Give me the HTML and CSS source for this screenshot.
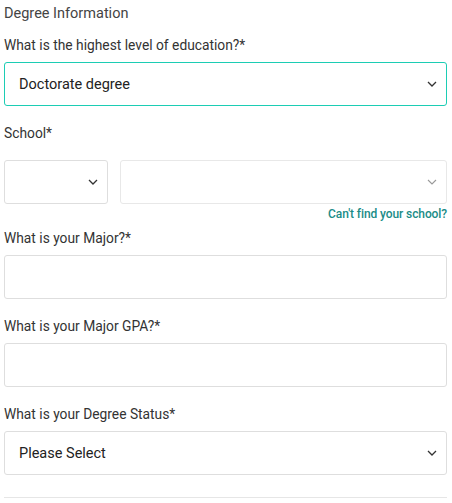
FILE: index.html
```html
<!DOCTYPE html>
<html>
<head>
<meta charset="utf-8">
<link rel="stylesheet" href="styles.css">
</head>
<body>
<div class="form">
  <div class="section-title">Degree Information</div>

  <div class="field">
    <div class="label">What is the highest level of education?*</div>
    <div class="box select active">
      <span class="value">Doctorate degree</span>
      <svg class="chev" width="10" height="6" viewBox="0 0 10 6"><path d="M1 1l4 4 4-4" fill="none" stroke="#333" stroke-width="1.3"/></svg>
    </div>
  </div>

  <div class="field school">
    <div class="label">School*</div>
    <div class="school-row">
      <div class="box select small">
        <svg class="chev" width="10" height="6" viewBox="0 0 10 6"><path d="M1 1l4 4 4-4" fill="none" stroke="#333" stroke-width="1.3"/></svg>
      </div>
      <div class="box select grow">
        <svg class="chev" width="10" height="6" viewBox="0 0 10 6"><path d="M1 1l4 4 4-4" fill="none" stroke="#999" stroke-width="1.1"/></svg>
      </div>
    </div>
    <div class="link-row"><a class="link">Can't find your school?</a></div>
  </div>

  <div class="field">
    <div class="label">What is your Major?*</div>
    <div class="box"></div>
  </div>

  <div class="field">
    <div class="label">What is your Major GPA?*</div>
    <div class="box"></div>
  </div>

  <div class="field">
    <div class="label">What is your Degree Status*</div>
    <div class="box select">
      <span class="value">Please Select</span>
      <svg class="chev" width="10" height="6" viewBox="0 0 10 6"><path d="M1 1l4 4 4-4" fill="none" stroke="#333" stroke-width="1.3"/></svg>
    </div>
  </div>

  <div class="divider"></div>
</div>
</body>
</html>
```
FILE: styles.css
```css
html, body {
  margin: 0;
  padding: 0;
  background: #fff;
}
body {
  font-family: Roboto, "Noto Sans", sans-serif;
  color: #333;
}
.form {
  padding: 5px 5px 0 4px;
  display: flex;
  flex-direction: column;
}
.section-title {
  font-size: 14.5px;
  line-height: 18px;
  color: #444;
  margin-bottom: 13px;
}
.field {
  display: flex;
  flex-direction: column;
  margin-bottom: 18px;
}
.label {
  font-size: 13.8px;
  line-height: 18px;
  color: #333;
  margin-bottom: 8px;
}
.school .label {
  margin-bottom: 18px;
}
.box {
  height: 44px;
  box-sizing: border-box;
  border: 1px solid #dedede;
  border-radius: 3px;
  background: #fff;
}
.box.select {
  display: flex;
  align-items: center;
  padding: 0 9px 0 14px;
}
.box.active {
  border-color: #1ccdb4;
}
.value {
  flex: 1;
  font-size: 14.5px;
  color: #222;
}
.chev {
  margin-left: auto;
}
.school-row {
  display: flex;
  gap: 12px;
}
.small {
  width: 104px;
}
.grow {
  flex: 1;
  border-color: #e8e8e8;
}
.link-row {
  display: flex;
  justify-content: flex-end;
  margin-top: 3px;
}
.link {
  font-size: 12px;
  line-height: 14px;
  font-weight: 500;
  color: #1a8c87;
  letter-spacing: -0.1px;
}
.school {
  margin-bottom: 8px;
}
.divider {
  height: 1px;
  background: #e6e6e6;
  margin-top: 4px;
}
```
